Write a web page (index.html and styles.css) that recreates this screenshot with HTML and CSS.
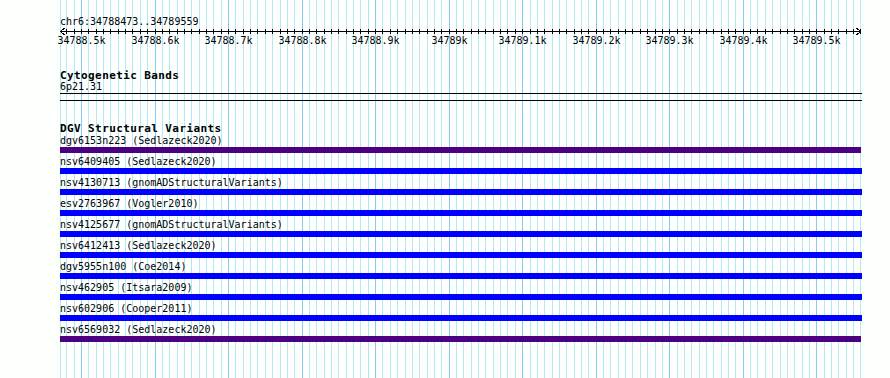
FILE: index.html
```html
<!DOCTYPE html>
<html lang="en">
<head>
    <meta charset="UTF-8">
    <title>chr6:34788473-34789559</title>
    <link rel="stylesheet" href="styles.css">
</head>
<body>
    <div class="browser">
        <svg class="grid" id="grid"></svg>
        <svg class="ruler" id="ruler" width="802" height="48"></svg>

        <div class="track cyto">
            <div class="track-title">Cytogenetic Bands</div>
            <div class="item-label">6p21.31</div>
        </div>

        <div class="track dgv">
            <div class="track-title">DGV Structural Variants</div>
            <ul class="items">
                <li><div class="item-label">dgv6153n223 (Sedlazeck2020)</div><div class="bar purple"></div></li>
                <li><div class="item-label">nsv6409405 (Sedlazeck2020)</div><div class="bar"></div></li>
                <li><div class="item-label">nsv4130713 (gnomADStructuralVariants)</div><div class="bar"></div></li>
                <li><div class="item-label">esv2763967 (Vogler2010)</div><div class="bar"></div></li>
                <li><div class="item-label">nsv4125677 (gnomADStructuralVariants)</div><div class="bar"></div></li>
                <li><div class="item-label">nsv6412413 (Sedlazeck2020)</div><div class="bar"></div></li>
                <li><div class="item-label">dgv5955n100 (Coe2014)</div><div class="bar"></div></li>
                <li><div class="item-label">nsv462905 (Itsara2009)</div><div class="bar"></div></li>
                <li><div class="item-label">nsv602906 (Cooper2011)</div><div class="bar"></div></li>
                <li><div class="item-label">nsv6569032 (Sedlazeck2020)</div><div class="bar purple"></div></li>
            </ul>
        </div>
    </div>

    <script>
        // window chr6:34788473-34789559, one tick / gridline every 10 bp
        const NS = 'http://www.w3.org/2000/svg';
        const firstMajor = 21;      // x of 34788.5k inside the track area
        const step = 7.353;         // px per 10 bp
        const tickX = j => Math.round(firstMajor + step * j) + 0.5;

        function el(name, attrs) {
            const node = document.createElementNS(NS, name);
            for (const k in attrs) node.setAttribute(k, attrs[k]);
            return node;
        }

        // background gridlines
        const grid = document.getElementById('grid');
        grid.appendChild(el('line', { x1: 0.5, x2: 0.5, y1: 0, y2: '100%', class: 'minor' }));
        for (let j = -2; j <= 106; j++) {
            const x = tickX(j);
            grid.appendChild(el('line', { x1: x, x2: x, y1: 0, y2: '100%', class: j % 10 === 0 ? 'major' : 'minor' }));
        }

        // base position ruler
        const ruler = document.getElementById('ruler');
        const pos = el('text', { x: 0, y: 25, class: 'ruler-text' });
        pos.textContent = 'chr6:34788473..34789559';
        ruler.appendChild(pos);

        ruler.appendChild(el('line', { x1: 0, x2: 801, y1: 31.5, y2: 31.5, class: 'axis' }));
        ruler.appendChild(el('polyline', { points: '4.5,28 0.5,31.5 4.5,35', class: 'axis' }));
        ruler.appendChild(el('polyline', { points: '796.5,28 800.5,31.5 796.5,35', class: 'axis' }));

        for (let j = -2; j <= 106; j++) {
            const x = tickX(j);
            ruler.appendChild(el('line', { x1: x, x2: x, y1: 29, y2: 34, class: 'axis' }));
            if (j >= 0 && j % 10 === 0 && j <= 100) {
                const label = el('text', { x: x, y: 44, 'text-anchor': 'middle', class: 'ruler-text' });
                label.textContent = (34788500 + j * 10) / 1000 + 'k';
                ruler.appendChild(label);
            }
        }
    </script>
</body>
</html>
```

FILE: styles.css
```css
body {
    margin: 0;
    background-color: #fdfffd;
    font-family: "DejaVu Sans Mono", "Liberation Mono", monospace;
    font-size: 10px;
    color: #000;
}

.browser {
    position: relative;
    z-index: 0;
    width: 802px;
    min-height: 378px;
    margin-left: 60px;
    background-color: #fff;
}

.grid {
    position: absolute;
    top: 0;
    left: 0;
    width: 100%;
    height: 100%;
    z-index: -1;
    shape-rendering: crispEdges;
}

.grid .minor {
    stroke: #aeecf2;
    stroke-width: 1;
}

.grid .major {
    stroke: #86ccec;
    stroke-width: 1;
}

.ruler {
    display: block;
    overflow: visible;
}

.ruler .axis {
    stroke: #000;
    stroke-width: 1;
    fill: none;
    shape-rendering: crispEdges;
}

.ruler-text {
    font-family: "DejaVu Sans Mono", "Liberation Mono", monospace;
    font-size: 10px;
    fill: #000;
}

.track-title {
    font-weight: bold;
    font-size: 11px;
    line-height: 11px;
    letter-spacing: 0.4px;
}

.item-label {
    line-height: 11px;
    white-space: nowrap;
}

.cyto {
    padding-top: 22px;
    padding-bottom: 1px;
    border-bottom: 1px solid #000;
}

.dgv {
    margin-top: 6px;
    padding-top: 22px;
    border-top: 1px solid #000;
}

.items {
    list-style: none;
    margin: 1px 0 0;
    padding: 0;
    display: flex;
    flex-direction: column;
    gap: 3px;
}

.bar {
    height: 6px;
    margin-top: 1px;
    background-color: #0000ff;
}

.bar.purple {
    margin-right: 1px;
    background-color: #4b0082;
}
```
